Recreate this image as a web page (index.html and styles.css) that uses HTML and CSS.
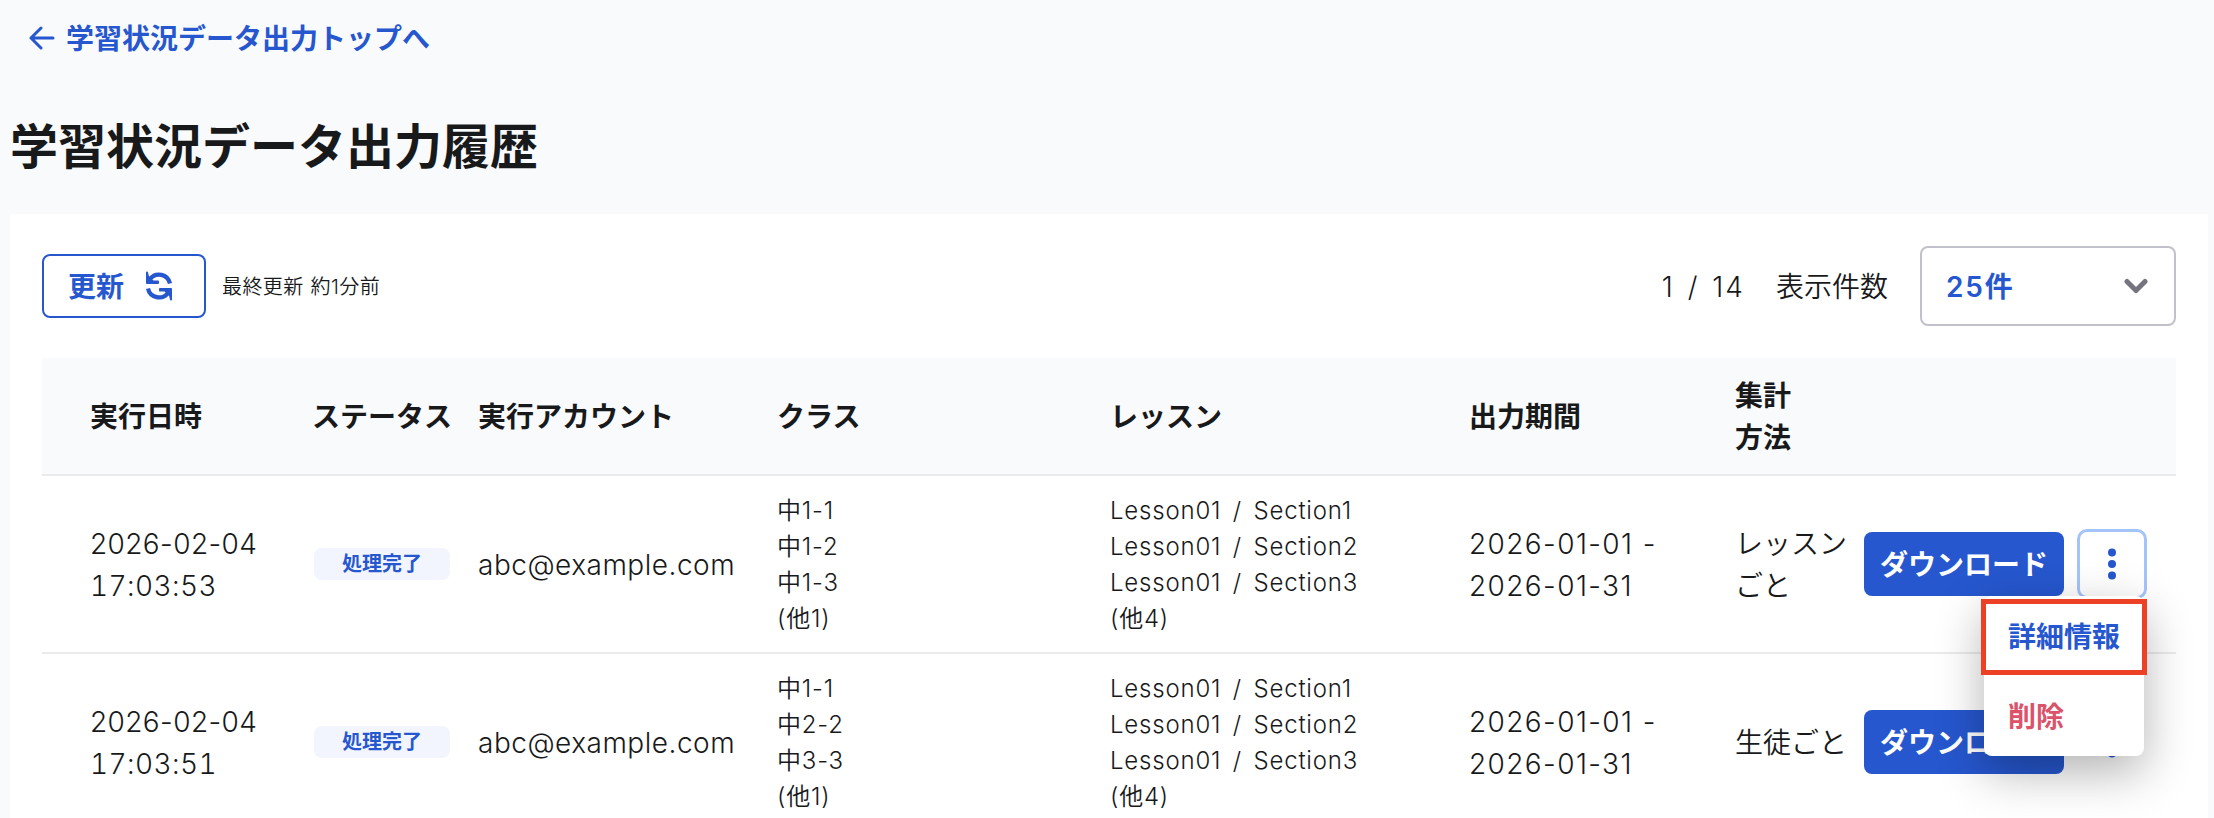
FILE: index.html
```
<!DOCTYPE html>
<html lang="ja">
<head>
  <meta charset="UTF-8">
  <title>学習状況データ出力履歴</title>
  <link rel="stylesheet" href="styles.css">
</head>
<body>
  <a class="back" href="#">
    <svg class="back-icon" viewBox="0 0 26 24" fill="none" stroke="currentColor" stroke-width="3" stroke-linecap="round" stroke-linejoin="round"><path d="M24 12H2M12 2L2 12l10 10"/></svg>
    <span>学習状況データ出力トップへ</span>
  </a>
  <h1>学習状況データ出力履歴</h1>

  <div class="card">
    <div class="toolbar">
      <button class="refresh">
        <span>更新</span>
        <svg class="refresh-icon" viewBox="0 0 28 30" fill="none" stroke="currentColor" stroke-width="4.200"><path d="M25 12.500A11.300 11.300 0 0 0 5 8"/><path d="M3 17.500A11.300 11.300 0 0 0 23 22"/><path fill="currentColor" stroke-width="2" stroke-linejoin="round" d="M2 1.500v10.500h11v-1.500H8L3 5.500zM26 28.500V18H15v1.500h5L25 24.500z"/></svg>
      </button>
      <span class="updated">最終更新 約1分前</span>
      <span class="page-count">1 / 14</span>
      <span class="per-page">表示件数</span>
      <div class="select">
        <span>25件</span>
        <svg class="chevron" viewBox="0 0 24 16" fill="none" stroke="currentColor" stroke-width="5" stroke-linecap="round" stroke-linejoin="round"><path d="M3 3.500l9 9 9-9"/></svg>
      </div>
    </div>

    <table>
      <colgroup>
        <col class="col-date"><col class="col-status"><col class="col-account"><col class="col-class"><col class="col-lesson"><col class="col-period"><col class="col-method"><col>
      </colgroup>
      <thead>
        <tr>
          <th>実行日時</th>
          <th>ステータス</th>
          <th>実行アカウント</th>
          <th>クラス</th>
          <th>レッスン</th>
          <th>出力期間</th>
          <th>集計<br>方法</th>
          <th></th>
        </tr>
      </thead>
      <tbody>
        <tr>
          <td class="date">2026-02-04<br><span class="time">17:03:53</span></td>
          <td><span class="badge">処理完了</span></td>
          <td class="account">abc@example.com</td>
          <td class="small">中1-1<br>中1-2<br>中1-3<br>(他1)</td>
          <td class="small">Lesson01 / Section1<br>Lesson01 / Section2<br>Lesson01 / Section3<br>(他4)</td>
          <td class="period">2026-01-01 -<br>2026-01-31</td>
          <td>レッスン<br>ごと</td>
          <td>
            <div class="actions">
              <button class="download">ダウンロード</button>
              <button class="more open"><svg viewBox="0 0 8 32" fill="currentColor"><circle cx="4" cy="4.500" r="4"/><circle cx="4" cy="16" r="4"/><circle cx="4" cy="27.500" r="4"/></svg></button>
              <div class="menu">
                <a class="menu-item" href="#">詳細情報</a>
                <a class="menu-item danger" href="#">削除</a>
                <div class="highlight"></div>
              </div>
            </div>
          </td>
        </tr>
        <tr>
          <td class="date">2026-02-04<br><span class="time">17:03:51</span></td>
          <td><span class="badge">処理完了</span></td>
          <td class="account">abc@example.com</td>
          <td class="small">中1-1<br>中2-2<br>中3-3<br>(他1)</td>
          <td class="small">Lesson01 / Section1<br>Lesson01 / Section2<br>Lesson01 / Section3<br>(他4)</td>
          <td class="period">2026-01-01 -<br>2026-01-31</td>
          <td>生徒ごと</td>
          <td>
            <div class="actions">
              <button class="download">ダウンロード</button>
              <button class="more"><svg viewBox="0 0 8 32" fill="currentColor"><circle cx="4" cy="4.500" r="4"/><circle cx="4" cy="16" r="4"/><circle cx="4" cy="27.500" r="4"/></svg></button>
            </div>
          </td>
        </tr>
      </tbody>
    </table>
  </div>
</body>
</html>
```
FILE: styles.css
```
* {
  box-sizing: border-box;
}

body {
  margin: 0;
  height: 818px;
  overflow: hidden;
  background: #f9fafc;
  color: #18191b;
  font-family: Inter, "Noto Sans CJK JP", sans-serif;
  font-size: 28px;
  font-weight: 350;
  line-height: 42px;
}

button {
  font: inherit;
  padding: 0;
  border: none;
  background: none;
}

a {
  text-decoration: none;
}

.back {
  display: flex;
  align-items: center;
  gap: 11px;
  height: 42px;
  margin: 17px 0 0 29px;
  color: #2657ce;
  font-weight: 600;
}

.back span {
  padding-top: 2px;
}

.back-icon {
  width: 26px;
  height: 24px;
}

h1 {
  margin: 52px 0 31px 10px;
  font-size: 48px;
  font-weight: 700;
  line-height: 72px;
}

.card {
  width: 2198px;
  margin-left: 10px;
  padding: 32px;
  background: #fff;
}

.toolbar {
  display: flex;
  align-items: center;
  height: 80px;
  margin-bottom: 32px;
}

.toolbar span {
  padding-top: 2px;
}

.refresh {
  display: flex;
  align-items: center;
  gap: 21px;
  width: 164px;
  height: 64px;
  padding-left: 24px;
  border: 2px solid #2657ce;
  border-radius: 8px;
  color: #2657ce;
  font-weight: 600;
}

.refresh-icon {
  width: 28px;
  height: 30px;
}

.updated {
  margin-left: 16px;
  font-size: 20px;
  letter-spacing: 0.4px;
  word-spacing: 1px;
}

.page-count {
  margin-left: auto;
  letter-spacing: 2px;
  word-spacing: 3px;
}

.per-page {
  margin: 0 32px 0 31px;
}

.select {
  display: flex;
  align-items: center;
  justify-content: space-between;
  width: 256px;
  height: 80px;
  padding: 0 26px 0 24px;
  border: 2px solid #c1c1cb;
  border-radius: 8px;
  color: #2657ce;
  font-weight: 600;
  letter-spacing: 1.8px;
}

.chevron {
  width: 24px;
  height: 16px;
  color: #74747e;
}

table {
  width: 2134px;
  table-layout: fixed;
  border-collapse: separate;
  border-spacing: 0;
}

.col-date { width: 264px; }
.col-status { width: 164px; }
.col-account { width: 299px; }
.col-class { width: 333px; }
.col-lesson { width: 359px; }
.col-period { width: 266px; }
.col-method { width: 137px; }

th,
td {
  padding: 17px 0 15px 8px;
  border-bottom: 2px solid #ebebed;
  text-align: left;
  vertical-align: middle;
  white-space: nowrap;
}

th {
  background: #f9fafc;
  font-weight: 600;
}

th:nth-child(2) {
  padding-left: 6px;
}

th:first-child,
td:first-child {
  padding-left: 48px;
}

td:nth-child(2) {
  padding: 16px 0 16px 8px;
}

td:last-child {
  padding: 16px 0;
}

.date {
  letter-spacing: 0.4px;
}

.time {
  font-feature-settings: "tnum";
}

.account {
  letter-spacing: 0.5px;
}

.period {
  letter-spacing: 1.4px;
}

.small {
  font-size: 24px;
  line-height: 36px;
  letter-spacing: 0.8px;
  word-spacing: 4px;
}

.badge {
  display: block;
  width: 136px;
  height: 32px;
  border-radius: 8px;
  background: #f2f5fe;
  color: #2657ce;
  font-size: 20px;
  font-weight: 600;
  line-height: 32px;
  text-align: center;
}

.actions {
  position: relative;
  display: flex;
  align-items: center;
  gap: 13px;
  height: 70px;
}

.download {
  width: 200px;
  height: 64px;
  padding-top: 2px;
  border-radius: 8px;
  background: #2657ce;
  color: #fff;
  font-weight: 600;
}

.more {
  display: flex;
  align-items: center;
  justify-content: center;
  width: 70px;
  height: 70px;
  border: 3px solid transparent;
  border-radius: 10px;
  color: #2657ce;
}

.more svg {
  width: 8px;
  height: 32px;
}

.more.open {
  border-color: #a5c3fb;
}

.menu {
  position: absolute;
  z-index: 1;
  top: 67px;
  left: 120px;
  width: 160px;
  height: 160px;
  border-radius: 8px;
  background: #fff;
  box-shadow: 0 16px 48px rgba(0, 0, 0, 0.3);
}

.menu-item {
  display: block;
  height: 80px;
  padding-left: 24px;
  color: #2657ce;
  font-weight: 600;
  line-height: 82px;
}

.menu-item.danger {
  color: #db526b;
}

.highlight {
  position: absolute;
  top: 3px;
  left: -3px;
  width: 166px;
  height: 76px;
  border: 5px solid #ec4125;
}
```
